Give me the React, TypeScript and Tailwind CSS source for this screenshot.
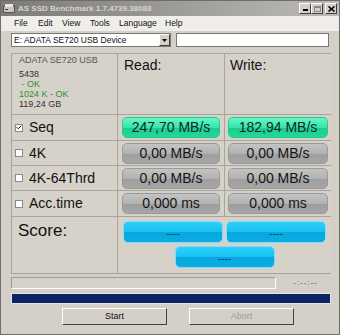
import { Check } from 'lucide-react'

const UI = { fontFamily: '"Liberation Sans", Arial, sans-serif' }

const rows = [
  { label: 'Seq', checked: true, read: '247,70 MB/s', write: '182,94 MB/s', done: true },
  { label: '4K', checked: false, read: '0,00 MB/s', write: '0,00 MB/s', done: false },
  { label: '4K-64Thrd', checked: false, read: '0,00 MB/s', write: '0,00 MB/s', done: false },
  { label: 'Acc.time', checked: false, read: '0,000 ms', write: '0,000 ms', done: false },
]

const menu = [
  { name: 'File', w: 'w-[24px]' },
  { name: 'Edit', w: 'w-[24px]' },
  { name: 'View', w: 'w-[28px]' },
  { name: 'Tools', w: 'w-[29px]' },
  { name: 'Language', w: 'w-[46px]' },
  { name: 'Help', w: 'w-[24px]' },
]

function ValueBox({ value, done }: { value: string; done: boolean }) {
  return (
    <div
      className={
        done
          ? 'flex h-[21px] items-center justify-center rounded-[5px] border border-[#27c98f] bg-[linear-gradient(to_bottom,#6af5c8_0%,#34e6aa_50%,#1ccd90_52%,#22d898_100%)] text-[14px] text-[#10281e]'
          : 'flex h-[21px] items-center justify-center rounded-[5px] border border-[#9a9a9a] bg-[linear-gradient(to_bottom,#c4c4c4_0%,#b2b2b2_50%,#9e9e9e_52%,#a6a6a6_100%)] text-[14px] text-[#141414]'
      }
    >
      {value}
    </div>
  )
}

function ScoreBox() {
  return (
    <div className="flex h-[22px] w-[100px] items-center justify-center rounded-[5px] border border-[#7fdcfb] bg-[linear-gradient(to_bottom,#2fd0fa_0%,#16c2f2_50%,#08a6dc_52%,#0aaee4_100%)] pt-[3px] text-[10px] leading-none text-[#0a3f63]">
      ----
    </div>
  )
}

function Checkbox({ checked }: { checked: boolean }) {
  return (
    <span className="flex h-[8px] w-[8px] items-center justify-center border border-[#8a8a8a] bg-white">
      {checked && <Check size={7} strokeWidth={4} className="text-black" />}
    </span>
  )
}

function WinButton({ children, disabled }: { children: string; disabled?: boolean }) {
  return (
    <div
      className={
        'flex h-[17px] w-[105px] items-center justify-center border border-t-white border-l-white border-r-[#404040] border-b-[#404040] bg-[#d4d0c8] text-[9px] ' +
        (disabled ? 'text-[#9c9a94]' : 'text-[#111]')
      }
    >
      {children}
    </div>
  )
}

export default function App() {
  return (
    <div
      className="flex h-[335px] w-[340px] flex-col border border-[#6f6d68] bg-[#d4d0c8] text-black"
      style={UI}
    >
      <div className="flex h-[15px] items-center bg-[linear-gradient(to_right,#7c7b78,#bdbbb6)] pl-[2px] pr-[2px]">
        <svg width="12" height="11" viewBox="0 0 12 11" className="mr-[3px]">
          <rect x="0.5" y="3.5" width="11" height="6" fill="#c9c6be" stroke="#555" />
          <rect x="2" y="1" width="8" height="3" fill="#e8e6e0" />
          <rect x="2" y="6" width="3" height="1" fill="#444" />
        </svg>
        <span className="text-[8px] font-bold text-[#d6d4ce]">AS SSD Benchmark 1.7.4739.38088</span>
        <div className="ml-auto flex items-center">
          <div className="flex h-[11px] w-[12px] items-end justify-center border border-t-white border-l-white border-r-[#404040] border-b-[#404040] bg-[#d4d0c8] pb-[2px]">
            <span className="h-[2px] w-[5px] bg-black" />
          </div>
          <div className="flex h-[11px] w-[12px] items-center justify-center border border-t-white border-l-white border-r-[#404040] border-b-[#404040] bg-[#d4d0c8]">
            <span className="h-[6px] w-[7px] border border-t-2 border-[#888]" />
          </div>
          <div className="ml-[2px] flex h-[11px] w-[12px] items-center justify-center border border-t-white border-l-white border-r-[#404040] border-b-[#404040] bg-[#d4d0c8]">
            <svg width="7" height="6" viewBox="0 0 7 6">
              <path d="M0.5 0.5 L6.5 5.5 M6.5 0.5 L0.5 5.5" stroke="black" strokeWidth="1.6" />
            </svg>
          </div>
        </div>
      </div>

      <div className="flex h-[15px] items-center bg-[#efeeea] pl-[13px] text-[8.5px] text-[#111]">
        {menu.map((m) => (
          <span key={m.name} className={m.w}>
            {m.name}
          </span>
        ))}
      </div>

      <div className="flex flex-1 flex-col px-[10px] pt-[2px]">
        <div className="flex items-center gap-[5px]">
          <div className="flex h-[14px] w-[161px] items-center border border-[#7a7870] bg-white">
            <span className="flex-1 pl-[2px] text-[8.5px] leading-none text-[#111]">E: ADATA SE720 USB Device</span>
            <span className="flex h-[12px] w-[11px] items-center justify-center border border-t-white border-l-white border-r-[#404040] border-b-[#404040] bg-[#d4d0c8]">
              <svg width="5" height="3" viewBox="0 0 5 3">
                <path d="M0 0 H5 L2.5 3 Z" fill="black" />
              </svg>
            </span>
          </div>
          <div className="h-[14px] w-[154px] border border-[#7a7870] bg-white" />
        </div>

        <div className="mt-[6px] grid w-[320px] grid-cols-[105px_106px_106px] grid-rows-[60px_25px_24px_24px_25px_56px] gap-px border border-[#a9a59d] bg-[#a9a59d]">
          <div className="flex flex-col bg-[#d6d2ca] pl-[7px] pt-[1px] text-[9px] leading-[10px]">
            <span className="text-[#555]">ADATA SE720 USB</span>
            <span className="mt-[4px] text-[#333]">5438</span>
            <span className="text-[#2f8f2f]">&nbsp;- OK</span>
            <span className="text-[#2f8f2f]">1024 K - OK</span>
            <span className="text-[#333]">119,24 GB</span>
          </div>
          <div className="bg-[#d6d2ca] pl-[6px] pt-[1px] text-[14px] text-[#111]">Read:</div>
          <div className="bg-[#d6d2ca] pl-[5px] pt-[1px] text-[14px] text-[#111]">Write:</div>

          {rows.map((r) => (
            <div key={r.label} className="contents">
              <div className="flex items-center gap-[6px] bg-[#d6d2ca] pl-[3px] text-[14px] text-[#111]">
                <Checkbox checked={r.checked} />
                <span>{r.label}</span>
              </div>
              <div className="flex flex-col justify-center bg-[#d6d2ca] px-[4px]">
                <ValueBox value={r.read} done={r.done} />
              </div>
              <div className="flex flex-col justify-center bg-[#d6d2ca] px-[3px]">
                <ValueBox value={r.write} done={r.done} />
              </div>
            </div>
          ))}

          <div className="bg-[#d6d2ca] pl-[6px] pt-[1px] text-[17px] text-[#111]">Score:</div>
          <div className="col-span-2 flex flex-col items-center gap-[3px] bg-[#d6d2ca] pt-[4px]">
            <div className="flex w-full justify-between px-[5px]">
              <ScoreBox />
              <ScoreBox />
            </div>
            <ScoreBox />
          </div>
        </div>

        <div className="mt-[3px] flex items-center">
          <div className="h-[12px] w-[265px] border border-t-[#a09c94] border-l-[#a09c94] border-r-white border-b-white bg-[#d6d2ca]" />
          <span className="ml-[17px] text-[8px] tracking-[1px] text-[#555]">-:--:--</span>
        </div>

        <div className="mt-[4px] h-[11px] w-[320px] border border-[#e8e6e0] bg-[#0b2466]" />

        <div className="mt-[4px] flex gap-[22px] pl-[51px]">
          <WinButton>Start</WinButton>
          <WinButton disabled>Abort</WinButton>
        </div>
      </div>
    </div>
  )
}
